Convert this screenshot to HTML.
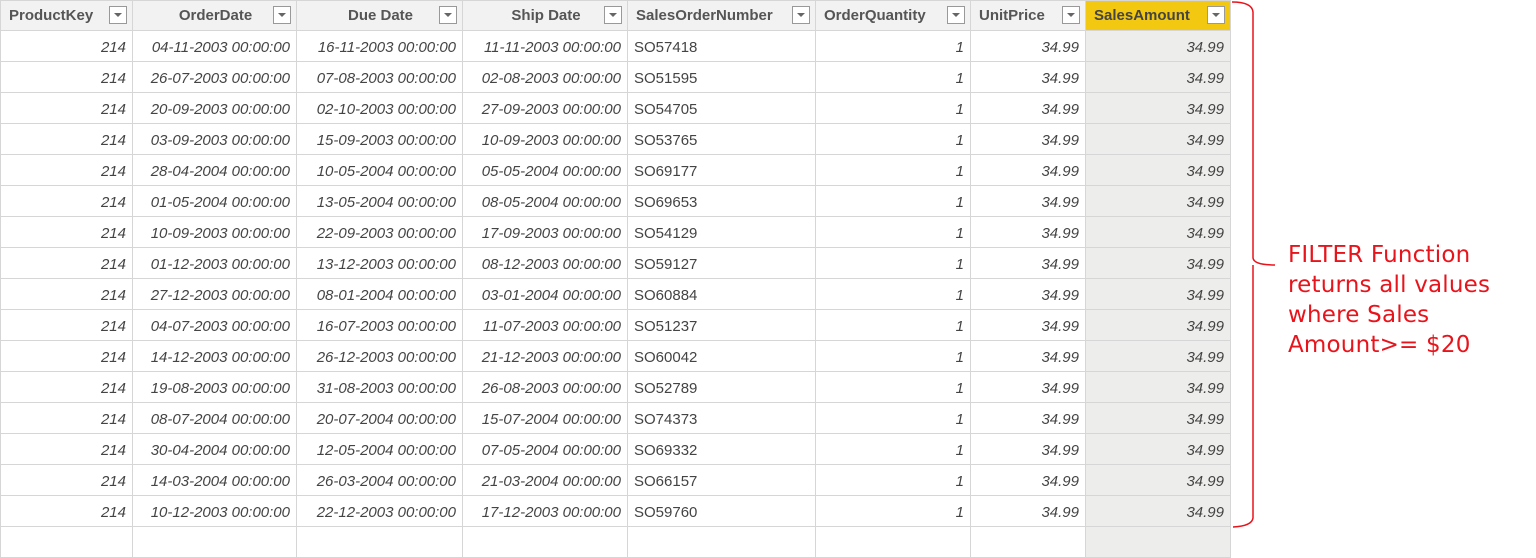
<!DOCTYPE html>
<html><head><meta charset="utf-8"><style>
body{margin:0;width:1536px;height:531px;background:#fff;overflow:hidden;position:relative;font-family:"Liberation Sans",sans-serif}
table{border-collapse:collapse;position:absolute;left:0;top:0;table-layout:fixed}
td,th{height:30px;padding:0 6px;border:1px solid #d6d6d6;font-size:15px;white-space:nowrap;overflow:hidden}
td{padding-top:2px;height:28px}
th{background:#f2f2f2;color:#555;font-weight:bold;text-align:left;position:relative;height:29px;padding-left:8px}
th.s{background:#f2c811;color:#444}
th span.d{position:absolute;right:5px;top:5px;width:18px;height:18px;border:1px solid #999;background:#fff;box-sizing:border-box}
th span.d:after{content:"";position:absolute;left:4px;top:6px;border-left:4px solid transparent;border-right:4px solid transparent;border-top:4px solid #666}
td{font-style:italic;color:#444;text-align:right}
td.l{text-align:left;font-style:normal}
td.g{background:#ededeb}
.note{position:absolute;left:1288px;top:240px;color:#e8141c;font-family:"DejaVu Sans",sans-serif;font-size:23px;line-height:30px;letter-spacing:0.2px}
</style></head><body>
<table>
<colgroup><col style="width:132px"><col style="width:164px"><col style="width:166px"><col style="width:165px"><col style="width:188px"><col style="width:155px"><col style="width:115px"><col style="width:145px"></colgroup>
<tr><th>ProductKey<span class="d"></span></th><th style="text-align:center">OrderDate<span class="d"></span></th><th style="text-align:center">Due Date<span class="d"></span></th><th style="text-align:center">Ship Date<span class="d"></span></th><th>SalesOrderNumber<span class="d"></span></th><th>OrderQuantity<span class="d"></span></th><th>UnitPrice<span class="d"></span></th><th class="s">SalesAmount<span class="d"></span></th></tr>
<tr><td>214</td><td>04-11-2003 00:00:00</td><td>16-11-2003 00:00:00</td><td>11-11-2003 00:00:00</td><td class="l">SO57418</td><td>1</td><td>34.99</td><td class="g">34.99</td></tr>
<tr><td>214</td><td>26-07-2003 00:00:00</td><td>07-08-2003 00:00:00</td><td>02-08-2003 00:00:00</td><td class="l">SO51595</td><td>1</td><td>34.99</td><td class="g">34.99</td></tr>
<tr><td>214</td><td>20-09-2003 00:00:00</td><td>02-10-2003 00:00:00</td><td>27-09-2003 00:00:00</td><td class="l">SO54705</td><td>1</td><td>34.99</td><td class="g">34.99</td></tr>
<tr><td>214</td><td>03-09-2003 00:00:00</td><td>15-09-2003 00:00:00</td><td>10-09-2003 00:00:00</td><td class="l">SO53765</td><td>1</td><td>34.99</td><td class="g">34.99</td></tr>
<tr><td>214</td><td>28-04-2004 00:00:00</td><td>10-05-2004 00:00:00</td><td>05-05-2004 00:00:00</td><td class="l">SO69177</td><td>1</td><td>34.99</td><td class="g">34.99</td></tr>
<tr><td>214</td><td>01-05-2004 00:00:00</td><td>13-05-2004 00:00:00</td><td>08-05-2004 00:00:00</td><td class="l">SO69653</td><td>1</td><td>34.99</td><td class="g">34.99</td></tr>
<tr><td>214</td><td>10-09-2003 00:00:00</td><td>22-09-2003 00:00:00</td><td>17-09-2003 00:00:00</td><td class="l">SO54129</td><td>1</td><td>34.99</td><td class="g">34.99</td></tr>
<tr><td>214</td><td>01-12-2003 00:00:00</td><td>13-12-2003 00:00:00</td><td>08-12-2003 00:00:00</td><td class="l">SO59127</td><td>1</td><td>34.99</td><td class="g">34.99</td></tr>
<tr><td>214</td><td>27-12-2003 00:00:00</td><td>08-01-2004 00:00:00</td><td>03-01-2004 00:00:00</td><td class="l">SO60884</td><td>1</td><td>34.99</td><td class="g">34.99</td></tr>
<tr><td>214</td><td>04-07-2003 00:00:00</td><td>16-07-2003 00:00:00</td><td>11-07-2003 00:00:00</td><td class="l">SO51237</td><td>1</td><td>34.99</td><td class="g">34.99</td></tr>
<tr><td>214</td><td>14-12-2003 00:00:00</td><td>26-12-2003 00:00:00</td><td>21-12-2003 00:00:00</td><td class="l">SO60042</td><td>1</td><td>34.99</td><td class="g">34.99</td></tr>
<tr><td>214</td><td>19-08-2003 00:00:00</td><td>31-08-2003 00:00:00</td><td>26-08-2003 00:00:00</td><td class="l">SO52789</td><td>1</td><td>34.99</td><td class="g">34.99</td></tr>
<tr><td>214</td><td>08-07-2004 00:00:00</td><td>20-07-2004 00:00:00</td><td>15-07-2004 00:00:00</td><td class="l">SO74373</td><td>1</td><td>34.99</td><td class="g">34.99</td></tr>
<tr><td>214</td><td>30-04-2004 00:00:00</td><td>12-05-2004 00:00:00</td><td>07-05-2004 00:00:00</td><td class="l">SO69332</td><td>1</td><td>34.99</td><td class="g">34.99</td></tr>
<tr><td>214</td><td>14-03-2004 00:00:00</td><td>26-03-2004 00:00:00</td><td>21-03-2004 00:00:00</td><td class="l">SO66157</td><td>1</td><td>34.99</td><td class="g">34.99</td></tr>
<tr><td>214</td><td>10-12-2003 00:00:00</td><td>22-12-2003 00:00:00</td><td>17-12-2003 00:00:00</td><td class="l">SO59760</td><td>1</td><td>34.99</td><td class="g">34.99</td></tr>
<tr><td>&nbsp;</td><td></td><td></td><td></td><td class="l"></td><td></td><td></td><td class="g"></td></tr>
</table>
<svg style="position:absolute;left:1225px;top:0" width="60" height="531"><path d="M7 2 Q27 2 28 12 L28 258 Q29 265 50 265 M28 265 Q28 268 28 272 L28 518 Q27 526 8 527" fill="none" stroke="#e8141c" stroke-width="1.5"/></svg>
<div class="note">FILTER Function<br>returns all values<br>where Sales<br>Amount&gt;= $20</div>
</body></html>
